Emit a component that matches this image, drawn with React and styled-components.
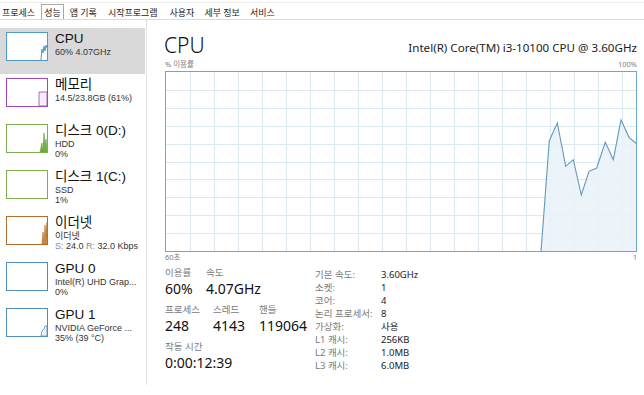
import React from "react";
import styled, { createGlobalStyle } from "styled-components";

const GlobalStyle = createGlobalStyle`
  html, body {
    margin: 0;
    padding: 0;
    background: #ffffff;
  }
  body {
    font-family: "Segoe UI", "Noto Sans", "Noto Sans CJK KR", sans-serif;
    color: #1a1a1a;
  }
`;

const tabs = ["프로세스", "성능", "앱 기록", "시작프로그램", "사용자", "세부 정보", "서비스"];

const devices = [
  { name: "CPU", lines: ["60% 4.07GHz"], color: "#4f9bc6", fill: "#eef5fa", kind: "cpu", selected: true },
  { name: "메모리", lines: ["14.5/23.8GB (61%)"], color: "#9b4bb5", fill: "#f6eefa", kind: "mem" },
  { name: "디스크 0(D:)", lines: ["HDD", "0%"], color: "#7fae4f", fill: "#f3f8ee", kind: "disk" },
  { name: "디스크 1(C:)", lines: ["SSD", "1%"], color: "#7fae4f", fill: "#f3f8ee", kind: "none" },
  { name: "이더넷", lines: ["이더넷", "net"], color: "#b0702c", fill: "#fbf3ea", kind: "eth" },
  { name: "GPU 0", lines: ["Intel(R) UHD Grap...", "0%"], color: "#4f8fc0", fill: "#eef5fa", kind: "none" },
  { name: "GPU 1", lines: ["NVIDIA GeForce ...", "35% (39 °C)"], color: "#4f8fc0", fill: "#eef5fa", kind: "gpu" },
];

const points = [
  [375, 180], [383.3, 68.7], [391.3, 51], [399.7, 94.3], [407.3, 87.7],
  [415.3, 123], [423, 99.3], [430.7, 96], [439.3, 70.3], [447.3, 87.7],
  [455, 48], [463, 65.3], [471, 72],
];

const Window = styled.div`
  width: 644px;
  height: 395px;
  display: flex;
  flex-direction: column;
  overflow: hidden;
`;

const TabBar = styled.div`
  margin-top: 2px;
  height: 18px;
  box-sizing: border-box;
  border-top: 1px solid #ececec;
  border-bottom: 1px solid #dadada;
  display: flex;
  align-items: stretch;
  padding: 1px 0 0 0;
  gap: 1px;
`;

const Tab = styled.div`
  font-size: 9px;
  line-height: 15px;
  padding: 0 2px 0 ${(p) => (p.$first ? 1 : 2)}px;
  margin-right: ${(p) => p.$gap}px;
  color: #222;
  border: 1px solid ${(p) => (p.$active ? "#a8a8a8" : "transparent")};
  border-bottom: none;
  background: #fff;
  white-space: nowrap;
`;

const Body = styled.div`
  flex: 1;
  display: flex;
`;

const Sidebar = styled.div`
  width: 146px;
  border-right: 1px solid #e3e3e3;
  padding-top: 8px;
  display: flex;
  flex-direction: column;
  margin-bottom: 10px;
`;

const Item = styled.div`
  height: 46px;
  box-sizing: border-box;
  padding: 4px 0 0 6px;
  display: flex;
  gap: 7px;
  background: ${(p) => (p.$selected ? "#d9d9d9" : "transparent")};
  width: 145px;
`;

const Thumb = styled.div`
  width: 42px;
  height: 29px;
  box-sizing: border-box;
  border: 1px solid ${(p) => p.$color};
  background: #fff;
  flex-shrink: 0;
  svg {
    display: block;
  }
`;

const ItemText = styled.div`
  display: flex;
  flex-direction: column;
  margin-top: -1px;
  font-family: "Liberation Sans", "Noto Sans CJK KR", sans-serif;
`;

const ItemName = styled.div`
  font-size: 13.5px;
  line-height: 15.5px;
  color: #111;
`;

const ItemLine = styled.div`
  font-size: 9px;
  line-height: 10.5px;
  color: #333;
  white-space: nowrap;
`;

const Dim = styled.span`
  color: #8a8a8a;
`;

const Main = styled.div`
  flex: 1;
  padding: 9px 7px 0 18px;
  display: flex;
  flex-direction: column;
`;

const Header = styled.div`
  display: flex;
  justify-content: space-between;
  align-items: flex-end;
  height: 30px;
`;

const Title = styled.div`
  font-size: 21px;
  font-weight: 300;
  line-height: 28px;
  margin-left: -1px;
  color: #111;
`;

const Model = styled.div`
  font-size: 11.6px;
  line-height: 16px;
  color: #222;
  padding-bottom: 3px;
`;

const AxisRow = styled.div`
  display: flex;
  justify-content: space-between;
  font-size: 7.5px;
  line-height: 10px;
  color: #808080;
  height: ${(p) => p.$h}px;
`;

const Graph = styled.div`
  width: 472px;
  height: 181px;
  box-sizing: border-box;
  border: 1px solid #6aa9cb;
  svg {
    display: block;
  }
`;

const Stats = styled.div`
  display: flex;
  margin-top: 4px;
`;

const StatsLeft = styled.div`
  width: 150px;
  display: flex;
  flex-direction: column;
`;

const StatRow = styled.div`
  display: flex;
`;

const Stat = styled.div`
  width: ${(p) => p.$w}px;
  display: flex;
  flex-direction: column;
`;

const StatLabel = styled.div`
  font-size: 9.5px;
  line-height: 13px;
  color: #7a7a7a;
`;

const StatValue = styled.div`
  font-size: 14px;
  line-height: 20px;
  color: #111;
  margin-bottom: 4px;
  white-space: nowrap;
`;

const InfoTable = styled.div`
  display: grid;
  grid-template-columns: 66px auto;
  grid-auto-rows: 13px;
  font-size: 9.5px;
  line-height: 13px;
  margin-top: 2px;
`;

const InfoLabel = styled.div`
  color: #7a7a7a;
`;

const InfoValue = styled.div`
  color: #222;
`;

function MiniGraph({ kind, color, fill }) {
  let shape = null;
  if (kind === "cpu") {
    shape = <polyline points="34,27 35,16 36,20 37,13 38,18 39,12 40,15" fill="none" stroke={color} strokeWidth="1" />;
  } else if (kind === "mem") {
    shape = <path d="M32,27 L32,13 L40,13 L40,27 Z" fill={fill} stroke={color} strokeWidth="0.8" />;
  } else if (kind === "disk") {
    shape = <path d="M33,27 L35,18 L36,27 L37,8 L38,22 L39,14 L40,27 Z" fill="#6fb33c" stroke="#5aa02a" strokeWidth="0.6" />;
  } else if (kind === "eth") {
    shape = <path d="M35,27 L36,15 L37,24 L38,8 L39,20 L40,5 L40,27 Z" fill="#d08a3c" stroke="#b0702c" strokeWidth="0.6" />;
  } else if (kind === "gpu") {
    shape = <path d="M34,27 L35,22 L37,20 L38,17 L40,17 L40,27 Z" fill={fill} stroke={color} strokeWidth="0.8" />;
  }
  return (
    <svg width="40" height="27" viewBox="0 0 40 27">
      {shape}
    </svg>
  );
}

function CpuGraph() {
  const vertical = [];
  for (let x = 24; x < 470; x += 24) vertical.push(x);
  const horizontal = [];
  for (let i = 1; i < 10; i++) horizontal.push(i * 17.9);
  const line = points.map((p) => p.join(",")).join(" ");
  const area = `M375,179 ${points.map((p) => `L${p[0]},${p[1]}`).join(" ")} L470,179 Z`;
  return (
    <svg width="470" height="179" viewBox="0 0 470 179">
      {vertical.map((x) => (
        <line key={"v" + x} x1={x + 0.5} y1="0" x2={x + 0.5} y2="179" stroke="#dde9f1" strokeWidth="1" />
      ))}
      {horizontal.map((y) => (
        <line key={"h" + y} x1="0" y1={Math.round(y) + 0.5} x2="470" y2={Math.round(y) + 0.5} stroke="#dde9f1" strokeWidth="1" />
      ))}
      <path d={area} fill="#e9f2f9" fillOpacity="0.85" />
      <polyline points={line} fill="none" stroke="#5f9ab9" strokeWidth="1.1" />
    </svg>
  );
}

const tabGaps = [2, 2, 4, 5, 3, 3, 0];

export default function App() {
  return (
    <>
      <GlobalStyle />
      <Window>
        <TabBar>
          {tabs.map((t, i) => (
            <Tab key={t} $first={i === 0} $gap={tabGaps[i]} $active={t === "성능"}>{t}</Tab>
          ))}
        </TabBar>
        <Body>
          <Sidebar>
            {devices.map((d) => (
              <Item key={d.name} $selected={d.selected}>
                <Thumb $color={d.color}>
                  <MiniGraph kind={d.kind} color={d.color} fill={d.fill} />
                </Thumb>
                <ItemText>
                  <ItemName>{d.name}</ItemName>
                  {d.lines.map((l) =>
                    l === "net" ? (
                      <ItemLine key={l}>
                        <Dim>S:</Dim> 24.0 <Dim>R:</Dim> 32.0 Kbps
                      </ItemLine>
                    ) : (
                      <ItemLine key={l}>{l}</ItemLine>
                    )
                  )}
                </ItemText>
              </Item>
            ))}
          </Sidebar>
          <Main>
            <Header>
              <Title>CPU</Title>
              <Model>Intel(R) Core(TM) i3-10100 CPU @ 3.60GHz</Model>
            </Header>
            <AxisRow $h={12}>
              <span>% 이용률</span>
              <span>100%</span>
            </AxisRow>
            <Graph>
              <CpuGraph />
            </Graph>
            <AxisRow $h={10}>
              <span>60초</span>
              <span>1</span>
            </AxisRow>
            <Stats>
              <StatsLeft>
                <StatRow>
                  <Stat $w={41}>
                    <StatLabel>이용률</StatLabel>
                    <StatValue>60%</StatValue>
                  </Stat>
                  <Stat $w={80}>
                    <StatLabel>속도</StatLabel>
                    <StatValue>4.07GHz</StatValue>
                  </Stat>
                </StatRow>
                <StatRow>
                  <Stat $w={48}>
                    <StatLabel>프로세스</StatLabel>
                    <StatValue>248</StatValue>
                  </Stat>
                  <Stat $w={46}>
                    <StatLabel>스레드</StatLabel>
                    <StatValue>4143</StatValue>
                  </Stat>
                  <Stat $w={50}>
                    <StatLabel>핸들</StatLabel>
                    <StatValue>119064</StatValue>
                  </Stat>
                </StatRow>
                <Stat $w={120}>
                  <StatLabel>작동 시간</StatLabel>
                  <StatValue>0:00:12:39</StatValue>
                </Stat>
              </StatsLeft>
              <InfoTable>
                <InfoLabel>기본 속도:</InfoLabel><InfoValue>3.60GHz</InfoValue>
                <InfoLabel>소켓:</InfoLabel><InfoValue>1</InfoValue>
                <InfoLabel>코어:</InfoLabel><InfoValue>4</InfoValue>
                <InfoLabel>논리 프로세서:</InfoLabel><InfoValue>8</InfoValue>
                <InfoLabel>가상화:</InfoLabel><InfoValue>사용</InfoValue>
                <InfoLabel>L1 캐시:</InfoLabel><InfoValue>256KB</InfoValue>
                <InfoLabel>L2 캐시:</InfoLabel><InfoValue>1.0MB</InfoValue>
                <InfoLabel>L3 캐시:</InfoLabel><InfoValue>6.0MB</InfoValue>
              </InfoTable>
            </Stats>
          </Main>
        </Body>
      </Window>
    </>
  );
}
